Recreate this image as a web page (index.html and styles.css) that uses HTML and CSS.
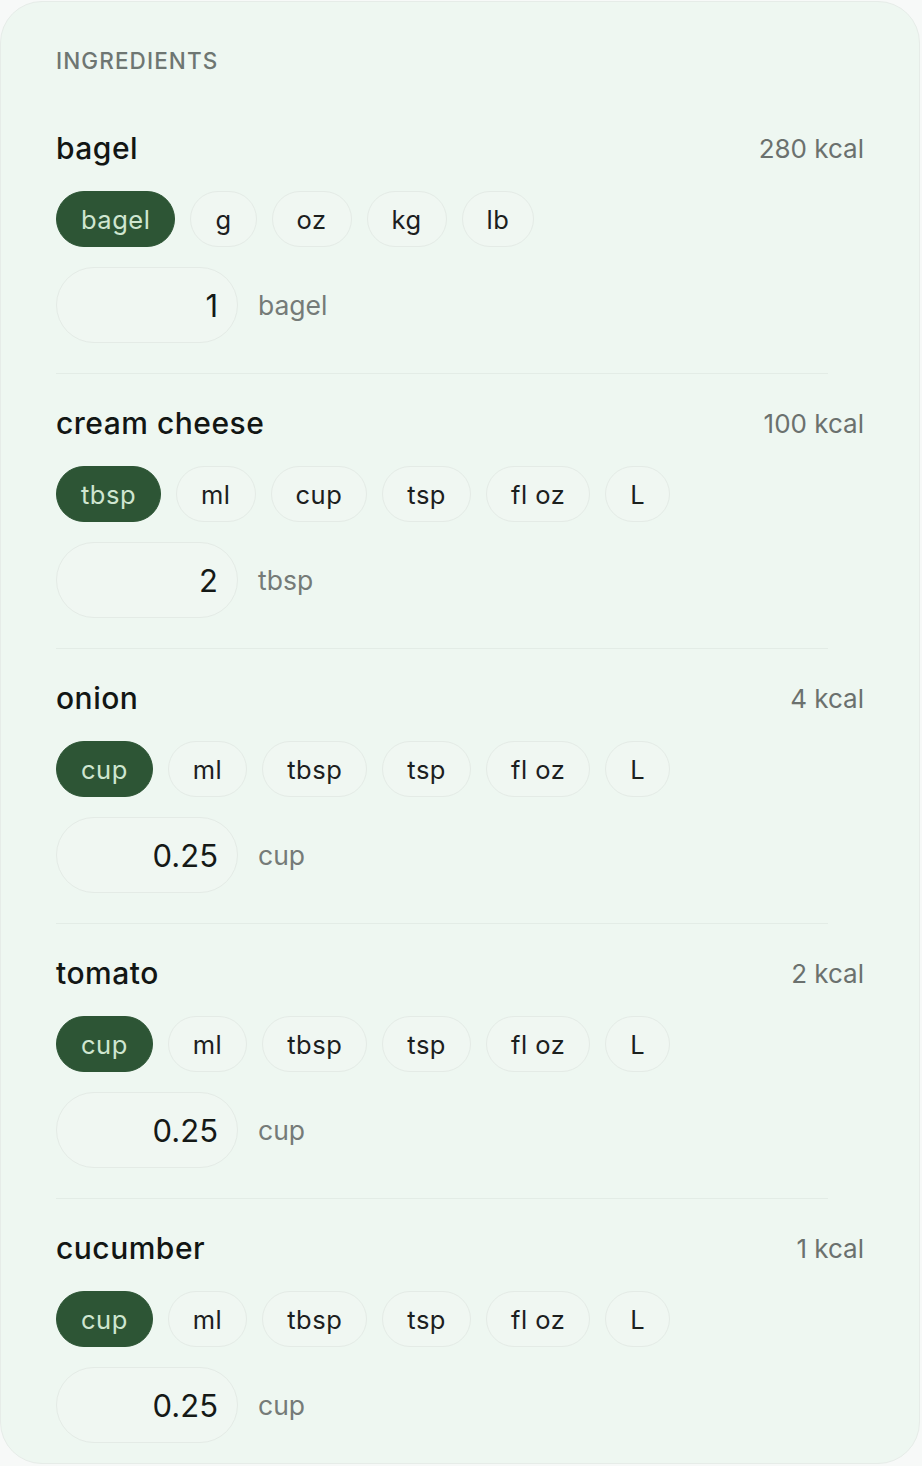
FILE: index.html
```html
<!DOCTYPE html>
<html>
<head>
<meta charset="utf-8">
<link rel="stylesheet" href="styles.css">
</head>
<body>
<div class="card">
  <div class="label">INGREDIENTS</div>

  <section class="ing">
    <div class="head"><span class="name">bagel</span><span class="kcal">280 kcal</span></div>
    <div class="chips">
      <span class="chip active">bagel</span><span class="chip">g</span><span class="chip">oz</span><span class="chip">kg</span><span class="chip">lb</span>
    </div>
    <div class="qty"><span class="box">1</span><span class="unit">bagel</span></div>
  </section>

  <section class="ing">
    <div class="head"><span class="name">cream cheese</span><span class="kcal">100 kcal</span></div>
    <div class="chips">
      <span class="chip active">tbsp</span><span class="chip">ml</span><span class="chip">cup</span><span class="chip">tsp</span><span class="chip">fl oz</span><span class="chip">L</span>
    </div>
    <div class="qty"><span class="box">2</span><span class="unit">tbsp</span></div>
  </section>

  <section class="ing">
    <div class="head"><span class="name">onion</span><span class="kcal">4 kcal</span></div>
    <div class="chips">
      <span class="chip active">cup</span><span class="chip">ml</span><span class="chip">tbsp</span><span class="chip">tsp</span><span class="chip">fl oz</span><span class="chip">L</span>
    </div>
    <div class="qty"><span class="box">0.25</span><span class="unit">cup</span></div>
  </section>

  <section class="ing">
    <div class="head"><span class="name">tomato</span><span class="kcal">2 kcal</span></div>
    <div class="chips">
      <span class="chip active">cup</span><span class="chip">ml</span><span class="chip">tbsp</span><span class="chip">tsp</span><span class="chip">fl oz</span><span class="chip">L</span>
    </div>
    <div class="qty"><span class="box">0.25</span><span class="unit">cup</span></div>
  </section>

  <section class="ing last">
    <div class="head"><span class="name">cucumber</span><span class="kcal">1 kcal</span></div>
    <div class="chips">
      <span class="chip active">cup</span><span class="chip">ml</span><span class="chip">tbsp</span><span class="chip">tsp</span><span class="chip">fl oz</span><span class="chip">L</span>
    </div>
    <div class="qty"><span class="box">0.25</span><span class="unit">cup</span></div>
  </section>
</div>
</body>
</html>
```

FILE: styles.css
```css
html, body {
  margin: 0;
  padding: 0;
  background: #f7f9f8;
}
body {
  font-family: Inter, "Noto Sans", sans-serif;
  height: 1466px;
  overflow: hidden;
}
.card {
  margin-top: 1px;
  width: 920px;
  box-sizing: border-box;
  background: #eef7f1;
  border: 1px solid #e6ece8;
  border-radius: 42px;
  padding: 44px 55px 20px 55px;
}
.label {
  font-size: 22.5px;
  line-height: 30px;
  letter-spacing: 1.1px;
  color: #6e7672;
  font-weight: 500;
  margin-bottom: 54px;
}
.ing {
  border-bottom: 1px solid #e3ece6;
  padding-bottom: 30px;
  margin-bottom: 31px;
  margin-right: 36px;
}
.ing.last {
  border-bottom: none;
  margin-bottom: 0;
  padding-bottom: 0;
}
.head {
  display: flex;
  justify-content: space-between;
  align-items: center;
  height: 36px;
  margin-right: -36px;
}
.name {
  font-size: 30px;
  font-weight: 500;
  letter-spacing: 0.5px;
  color: #121614;
}
.kcal {
  font-size: 26px;
  color: #6b716e;
}
.chips {
  display: flex;
  gap: 15px;
  margin-top: 25px;
}
.chip {
  height: 56px;
  box-sizing: border-box;
  border: 1px solid #e4ebe6;
  border-radius: 28px;
  padding: 0 24px;
  display: flex;
  align-items: center;
  font-size: 25.5px;
  letter-spacing: 0.5px;
  color: #1c201e;
  background: #f0f7f2;
}
.chip.active {
  background: #2d5535;
  border-color: #2d5535;
  color: #cfe6d0;
}
.qty {
  display: flex;
  align-items: center;
  margin-top: 20px;
  gap: 20px;
}
.box {
  width: 182px;
  height: 76px;
  box-sizing: border-box;
  border: 1px solid #e4ebe6;
  border-radius: 38px;
  padding-right: 19px;
  display: flex;
  align-items: center;
  justify-content: flex-end;
  font-size: 31px;
  color: #151917;
  background: #f0f7f2;
}
.unit {
  font-size: 26.5px;
  color: #757b78;
}
```
